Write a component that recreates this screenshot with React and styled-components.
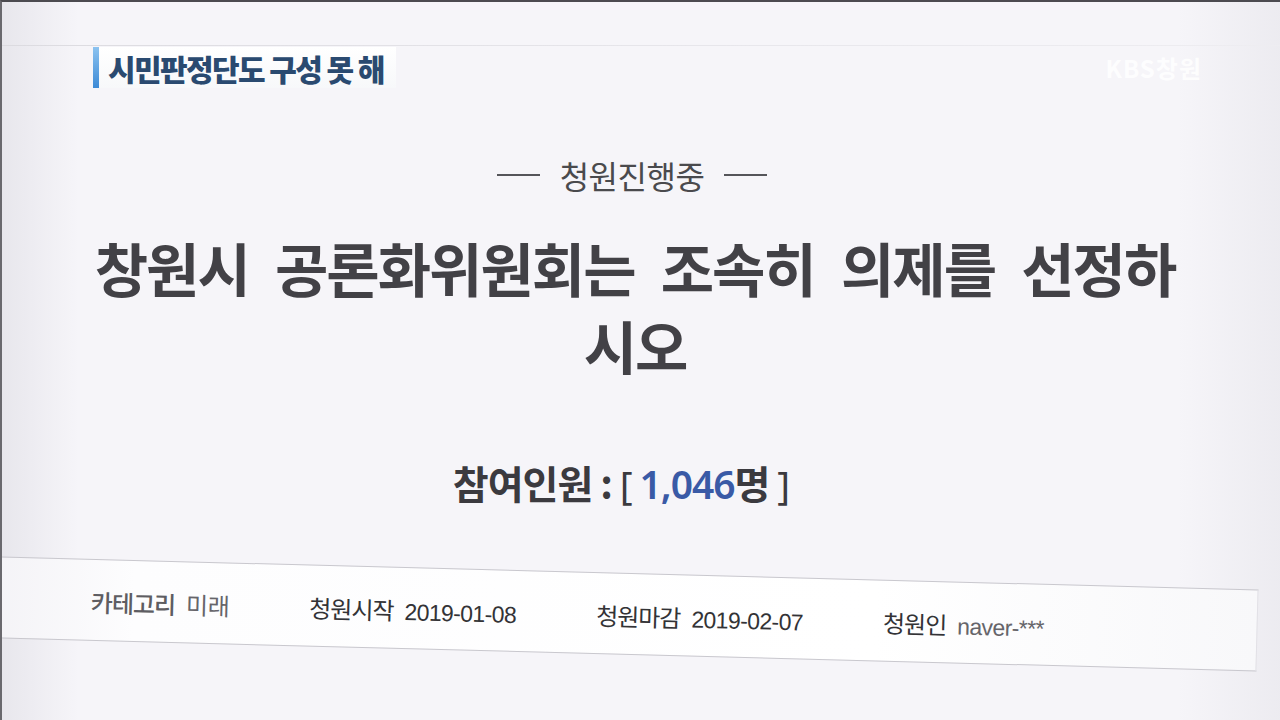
import React from "react";
import styled, { createGlobalStyle } from "styled-components";

const Global = createGlobalStyle`
  html, body { margin: 0; padding: 0; }
  body {
    background: #f3f2f6;
    font-family: "Noto Sans CJK KR", "Noto Sans", sans-serif;
  }
`;

const Screen = styled.div`
  position: relative;
  width: 1280px;
  height: 720px;
  box-sizing: border-box;
  overflow: hidden;
  border-top: 2px solid #4c4b50;
  border-left: 2px solid #6a696e;
  background:
    linear-gradient(90deg, rgba(228,227,233,0.8) 0%, rgba(246,245,249,0) 6%, rgba(246,245,249,0) 92%, rgba(234,233,238,0.8) 100%),
    #f6f5f9;
  display: flex;
  flex-direction: column;
  align-items: center;
`;

const TopRule = styled.div`
  align-self: stretch;
  height: 1px;
  margin-top: 43px;
  background: linear-gradient(90deg, #dcdbe0, #e8e7ec 60%, #eeedf1);
`;

const Caption = styled.div`
  position: absolute;
  left: 91px;
  top: 45px;
  height: 41px;
  display: flex;
  align-items: center;
  padding-right: 12px;
  background: linear-gradient(180deg, #ffffff, #f7f8fa);
`;

const CaptionBar = styled.span`
  width: 6px;
  align-self: stretch;
  background: linear-gradient(180deg, #8cc3f0, #3d8ad6);
  margin-right: 9px;
`;

const CaptionText = styled.span`
  font-size: 30px;
  font-weight: 900;
  color: #2a4a70;
  letter-spacing: -1.6px;
  line-height: 1;
`;

const Watermark = styled.div`
  position: absolute;
  right: 78px;
  top: 48px;
  font-size: 24px;
  font-weight: 700;
  color: rgba(255,255,255,0.85);
  letter-spacing: 1px;
`;

const Status = styled.div`
  margin-top: 109px;
  margin-left: -18px;
  display: flex;
  align-items: center;
  gap: 20px;
  font-size: 32px;
  line-height: 40px;
  color: #4a4a4d;
  letter-spacing: -0.5px;
`;

const Dash = styled.span`
  width: 43px;
  height: 2px;
  background: #55555a;
`;

const Title = styled.h1`
  margin: 33px 0 0 -12px;
  font-size: 58px;
  line-height: 78px;
  font-weight: 700;
  color: #424146;
  text-align: center;
  letter-spacing: -2px;
  word-spacing: 15px;
`;

const Count = styled.div`
  margin-top: 73px;
  margin-left: -40px;
  font-size: 39px;
  line-height: 50px;
  font-weight: 700;
  color: #3b3a3f;
  letter-spacing: -1px;
`;

const Num = styled.span`
  color: #3a5aa6;
  font-weight: 600;
  font-family: "Noto Sans", "Noto Sans CJK KR", sans-serif;
`;

const Bracket = styled.span`
  font-weight: 400;
  font-family: "Noto Sans", sans-serif;
`;

const MetaBox = styled.div`
  align-self: flex-start;
  margin-top: 47px;
  margin-left: -20px;
  width: 1277px;
  height: 82px;
  box-sizing: border-box;
  border-top: 1px solid #c9c8ce;
  border-bottom: 1px solid #c9c8ce;
  border-right: 1px solid #e2e1e6;
  background: linear-gradient(90deg, #f3f2f6 0%, #fdfdfe 12%, #ffffff 70%, #f8f8fa 100%);
  transform: rotate(1.5deg);
  transform-origin: 0 0;
  display: flex;
  align-items: center;
  padding: 2px 0 0 110px;
  gap: 80px;
`;

const MetaItem = styled.div`
  display: flex;
  align-items: baseline;
  gap: 11px;
  font-size: 24px;
  color: #333336;
`;

const Label = styled.span`
  font-weight: ${(p) => (p.$soft ? 500 : 400)};
  color: ${(p) => (p.$soft ? "#5e5d62" : "#333336")};
  letter-spacing: -1px;
`;

const Value = styled.span`
  font-family: ${(p) =>
    p.$latin ? '"Liberation Sans", sans-serif' : '"Noto Sans CJK KR", sans-serif'};
  font-size: ${(p) => (p.$latin ? "23px" : "24px")};
  color: ${(p) => (p.$soft ? "#66656a" : "#333336")};
  letter-spacing: ${(p) => (p.$latin ? "-0.6px" : "-0.5px")};
`;

export default function App() {
  return (
    <>
      <Global />
      <Screen>
        <TopRule />
        <Caption>
          <CaptionBar />
          <CaptionText>시민판정단도 구성 못 해</CaptionText>
        </Caption>
        <Watermark>KBS창원</Watermark>
        <Status>
          <Dash />
          <span>청원진행중</span>
          <Dash />
        </Status>
        <Title>
          창원시 공론화위원회는 조속히 의제를 선정하
          <br />
          시오
        </Title>
        <Count>
          참여인원 : <Bracket>[</Bracket> <Num>1,046</Num>명 <Bracket>]</Bracket>
        </Count>
        <MetaBox>
          <MetaItem>
            <Label $soft>카테고리</Label>
            <Value $soft>미래</Value>
          </MetaItem>
          <MetaItem>
            <Label>청원시작</Label>
            <Value $latin>2019-01-08</Value>
          </MetaItem>
          <MetaItem>
            <Label>청원마감</Label>
            <Value $latin>2019-02-07</Value>
          </MetaItem>
          <MetaItem>
            <Label>청원인</Label>
            <Value $latin $soft>naver-***</Value>
          </MetaItem>
        </MetaBox>
      </Screen>
    </>
  );
}
